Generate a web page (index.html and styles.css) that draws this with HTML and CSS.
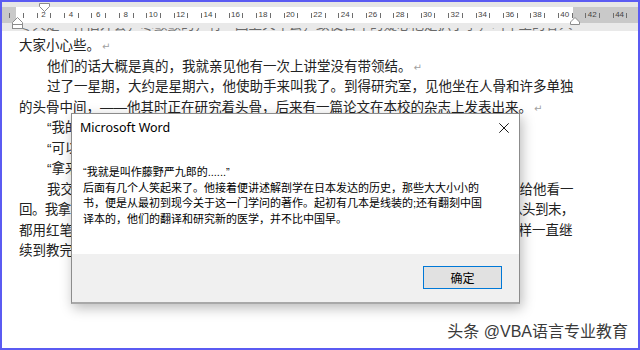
FILE: index.html
```html
<!DOCTYPE html>
<html lang="zh-CN">
<head>
<meta charset="utf-8">
<title>Microsoft Word</title>
<link rel="stylesheet" href="styles.css">
</head>
<body>
<div class="page">
  <div class="ruler-top"></div>
  <div class="ruler">
    <div class="cell"></div><div class="cell"></div><div class="cell"><span>2</span></div><div class="cell"></div>
    <div class="cell"><span>4</span></div><div class="cell"></div><div class="cell"><span>6</span></div><div class="cell"></div>
    <div class="cell"><span>8</span></div><div class="cell"></div><div class="cell"><span>10</span></div><div class="cell"></div>
    <div class="cell"><span>12</span></div><div class="cell"></div><div class="cell"><span>14</span></div><div class="cell"></div>
    <div class="cell"><span>16</span></div><div class="cell"></div><div class="cell"><span>18</span></div><div class="cell"></div>
    <div class="cell"><span>20</span></div><div class="cell"></div><div class="cell"><span>22</span></div><div class="cell"></div>
    <div class="cell"><span>24</span></div><div class="cell"></div><div class="cell"><span>26</span></div><div class="cell"></div>
    <div class="cell"><span>28</span></div><div class="cell"></div><div class="cell"><span>30</span></div><div class="cell"></div>
    <div class="cell"><span>32</span></div><div class="cell"></div><div class="cell"><span>34</span></div><div class="cell"></div>
    <div class="cell"><span>36</span></div><div class="cell"></div><div class="cell"><span>38</span></div><div class="cell"></div>
    <div class="cell"><span>40</span></div><div class="cell"></div><div class="cell"><span>42</span></div><div class="cell"></div>
    <div class="cell"><span>44</span></div><div class="cell"></div>
  </div>
  <div class="strip">
    <div class="strip-clip">
      <div class="strip-line">冬天是一件旧外套，寒颤颤的，有一回上火车去，致使管车的疑心他是扒子手，叫车里的客人</div>
    </div>
  </div>
  <div class="doc">
    <div class="ln">大家小心些。<span class="pm">↵</span></div>
    <div class="ln ind">他们的话大概是真的，我就亲见他有一次上讲堂没有带领结。<span class="pm">↵</span></div>
    <div class="ln ind">过了一星期，大约是星期六，他使助手来叫我了。到得研究室，见他坐在人骨和许多单独</div>
    <div class="ln">的头骨中间，——他其时正在研究着头骨，后来有一篇论文在本校的杂志上发表出来。<span class="pm">↵</span></div>
    <div class="ln ind">“我的讲义，你能抄下来么？”他问。<span class="pm">↵</span></div>
    <div class="ln ind">“可以抄一点。”<span class="pm">↵</span></div>
    <div class="ln ind">“拿来我看！”<span class="pm">↵</span></div>
    <div class="ln ind">我交出所抄的讲义去，他收下了，第二三天便还我，并且说，此后每一星期要送给他看一</div>
    <div class="ln tight">回。我拿下来打开看时，很吃了一惊，同时也感到一种不安和感激。原来我的讲义已经从头到末，</div>
    <div class="ln">都用红笔添改过了，不但增加了许多脱漏的地方，连文法的错误，也都一一订正。这样一直继</div>
    <div class="ln">续到教完了他所担任的功课：骨学、血管学、神经学。<span class="pm">↵</span></div>
  </div>

  <svg class="mk mk-first" width="11" height="9" viewBox="0 0 11 9"><path d="M0.5 0.5H10.5V3.5L5.5 8.5L0.5 3.5Z" fill="#fff" stroke="#8c8c8c"/></svg>
  <svg class="mk mk-hang" width="11" height="12" viewBox="0 0 11 12"><path d="M0.5 5.5L5.5 0.5L10.5 5.5V7.5H0.5Z" fill="#fff" stroke="#8c8c8c"/><rect x="0.5" y="7.5" width="10" height="4" fill="#fff" stroke="#8c8c8c"/></svg>
  <svg class="mk mk-right" width="10" height="8" viewBox="0 0 10 8"><path d="M0.5 5L5 0.5L9.5 5V7.5H0.5Z" fill="#fff" stroke="#8c8c8c"/></svg>

  <div class="dialog">
    <div class="dlg-head">
      <span class="dlg-title">Microsoft Word</span>
      <svg class="dlg-close" width="10" height="10" viewBox="0 0 10 10"><path d="M0.3 0.3L9.7 9.7M9.7 0.3L0.3 9.7" stroke="#1a1a1a" stroke-width="1"/></svg>
    </div>
    <div class="dlg-body">
      <div class="msg">“我就是叫作藤野严九郎的......”</div>
      <div class="msg">后面有几个人笑起来了。他接着便讲述解剖学在日本发达的历史，那些大大小小的</div>
      <div class="msg">书，便是从最初到现今关于这一门学问的著作。起初有几本是线装的;还有翻刻中国</div>
      <div class="msg">译本的，他们的翻译和研究新的医学，并不比中国早。</div>
    </div>
    <div class="dlg-foot">
      <button class="btn">确定</button>
    </div>
  </div>

  <div class="watermark">头条 @VBA语言专业教育</div>
</div>
</body>
</html>
```

FILE: styles.css
```css
html, body {
  margin: 0;
  padding: 0;
  background: #fff;
}

body {
  font-family: "Liberation Sans", "Noto Sans CJK SC", sans-serif;
}

.page {
  position: relative;
  width: 640px;
  height: 350px;
  box-sizing: border-box;
  border: 2px solid #5b5bf2;
  overflow: hidden;
  background: #fff;
}

.ruler-top {
  height: 5px;
  background: #e6e6e6;
}

.ruler {
  display: flex;
  height: 16px;
  padding-left: 7.14px;
  background: linear-gradient(to right, #c9c9c9 0 14px, #fff 14px 571px, #c9c9c9 571px);
  font-size: 8px;
  line-height: 16px;
  color: #444;
  white-space: nowrap;
}

.cell {
  position: relative;
  flex: 0 0 13.725px;
  width: 13.725px;
  display: flex;
  justify-content: center;
}

.cell::before {
  content: "";
  position: absolute;
  left: 0;
  top: 6px;
  width: 1px;
  height: 5px;
  background: #6e6e6e;
}

.cell span {
  display: block;
}

.strip {
  height: 8px;
  padding-top: 5px;
  box-sizing: border-box;
  background: #e9e9e9;
}

.strip-clip {
  height: 3px;
  overflow: hidden;
  padding-left: 17px;
}

.strip-line {
  margin-top: -13px;
  font-size: 13.5px;
  line-height: 20.5px;
  color: #6a6a6a;
  white-space: nowrap;
}

.doc {
  padding: 5px 0 0 17px;
  font-size: 13.5px;
  line-height: 20.5px;
  color: #222;
}

.ln {
  white-space: nowrap;
  height: 20.5px;
}

.ind {
  padding-left: 28px;
}

.tight {
  letter-spacing: -0.6px;
}

.pm {
  font-family: "DejaVu Sans", sans-serif;
  font-size: 10px;
  color: #a0a0a0;
  margin-left: 2px;
}

.mk {
  position: absolute;
  display: block;
}

.mk-first {
  left: 37px;
  top: 1px;
}

.mk-hang {
  left: 10px;
  top: 15px;
}

.mk-right {
  left: 568px;
  top: 15px;
}

.dialog {
  position: absolute;
  left: 69px;
  top: 111px;
  width: 449px;
  height: 191px;
  box-sizing: border-box;
  border: 1px solid #8c8c8c;
  border-bottom: 2px solid #a8a8a8;
  background: #fff;
  display: flex;
  flex-direction: column;
  box-shadow: 2px 4px 12px rgba(0, 0, 0, 0.28);
}

.dlg-head {
  height: 27px;
  display: flex;
  align-items: center;
  justify-content: space-between;
  padding: 0 10px 0 8px;
}

.dlg-title {
  font-family: "Noto Sans", "Liberation Sans", sans-serif;
  font-size: 12.5px;
  color: #000;
}

.dlg-close {
  display: block;
  margin-top: 1px;
}

.dlg-body {
  flex: 1;
  padding: 24px 10px 0 11px;
  font-size: 11px;
  line-height: 15.7px;
  color: #000;
}

.msg {
  white-space: nowrap;
}

.dlg-foot {
  height: 48px;
  background: #f0f0f0;
  display: flex;
  justify-content: flex-end;
  align-items: flex-start;
  padding: 12px 17px 0 0;
  box-sizing: border-box;
}

.btn {
  width: 79px;
  height: 23px;
  border: 1px solid #0078d7;
  background: #e1e1e1;
  font-family: "Noto Sans CJK SC", sans-serif;
  font-size: 12px;
  line-height: 20px;
  color: #000;
  padding: 0;
  margin: 0;
}

.watermark {
  position: absolute;
  right: 10px;
  bottom: 6px;
  font-size: 16px;
  line-height: 20px;
  color: #3a3a3a;
  text-shadow: 0 0 2px #fff, 0 0 1px #fff;
  white-space: nowrap;
}
```
